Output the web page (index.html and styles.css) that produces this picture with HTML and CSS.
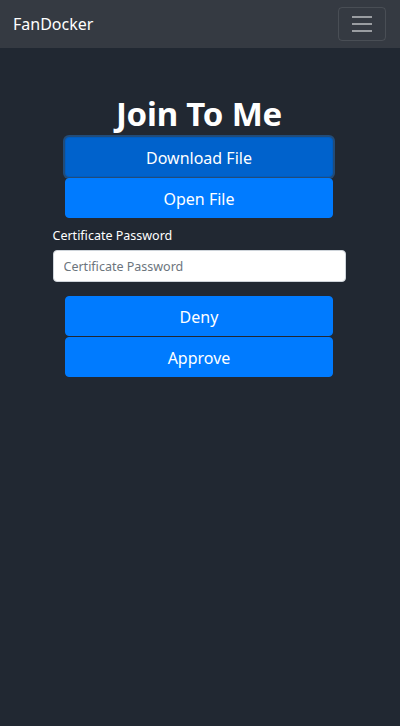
FILE: index.html
```html
<!DOCTYPE html>
<html>
<head>
<meta charset="utf-8">
<link rel="stylesheet" href="styles.css">
</head>
<body>
<nav class="navbar">
  <span class="brand">FanDocker</span>
  <button class="toggler" aria-label="menu">
    <span class="bar"></span><span class="bar"></span><span class="bar"></span>
  </button>
</nav>
<main class="main">
  <h1 class="title">Join To Me</h1>
  <div class="btn-group">
    <button class="btn btn-focus">Download File</button>
    <button class="btn">Open File</button>
  </div>
  <div class="form">
    <label class="label">Certificate Password</label>
    <input class="input" type="text" placeholder="Certificate Password">
  </div>
  <div class="btn-group actions">
    <button class="btn">Deny</button>
    <button class="btn">Approve</button>
  </div>
</main>
</body>
</html>
```

FILE: styles.css
```css
html, body {
  margin: 0;
  padding: 0;
  height: 100%;
}
body {
  background: #212832;
  font-family: "Noto Sans", "Open Sans", sans-serif;
  color: #fff;
}
.navbar {
  height: 48px;
  background: #353a42;
  display: flex;
  align-items: center;
  justify-content: space-between;
  padding: 0 14px 0 13px;
  box-sizing: border-box;
}
.brand {
  font-size: 16px;
  color: #fff;
}
.toggler {
  width: 48px;
  height: 34px;
  background: transparent;
  border: 1px solid rgba(255,255,255,0.1);
  border-radius: 4px;
  display: flex;
  flex-direction: column;
  align-items: center;
  justify-content: center;
  gap: 5px;
  padding: 0;
}
.bar {
  display: block;
  width: 20px;
  height: 2px;
  background: rgba(255,255,255,0.5);
}
.main {
  display: flex;
  flex-direction: column;
  align-items: center;
  padding-top: 43px;
  padding-right: 2px;
}
.title {
  margin: 0;
  font-size: 33px;
  font-weight: 700;
  line-height: 45px;
  letter-spacing: -0.2px;
}
.btn-group {
  display: flex;
  flex-direction: column;
  gap: 1px;
  width: 268px;
  margin-top: 1px;
}
.btn {
  height: 40px;
  background: #007bff;
  border: 1px solid #007bff;
  border-radius: 4px;
  color: #fff;
  font-family: inherit;
  font-size: 16px;
  padding: 2px 0 0;
}
.btn-focus {
  background: #0062cc;
  border-color: #005cbf;
  box-shadow: 0 0 0 2px rgba(38,143,255,0.35);
}
.form {
  width: 293px;
  margin-top: 9px;
  display: flex;
  flex-direction: column;
}
.label {
  font-size: 12.5px;
  line-height: 18px;
  margin-bottom: 5px;
}
.input {
  height: 32px;
  box-sizing: border-box;
  border: 1px solid #ced4da;
  border-radius: 4px;
  background: #fff;
  font-family: inherit;
  font-size: 12.5px;
  padding: 0 10px;
  outline: none;
}
.input::placeholder {
  color: #6c757d;
}
.actions {
  margin-top: 14px;
}
```
